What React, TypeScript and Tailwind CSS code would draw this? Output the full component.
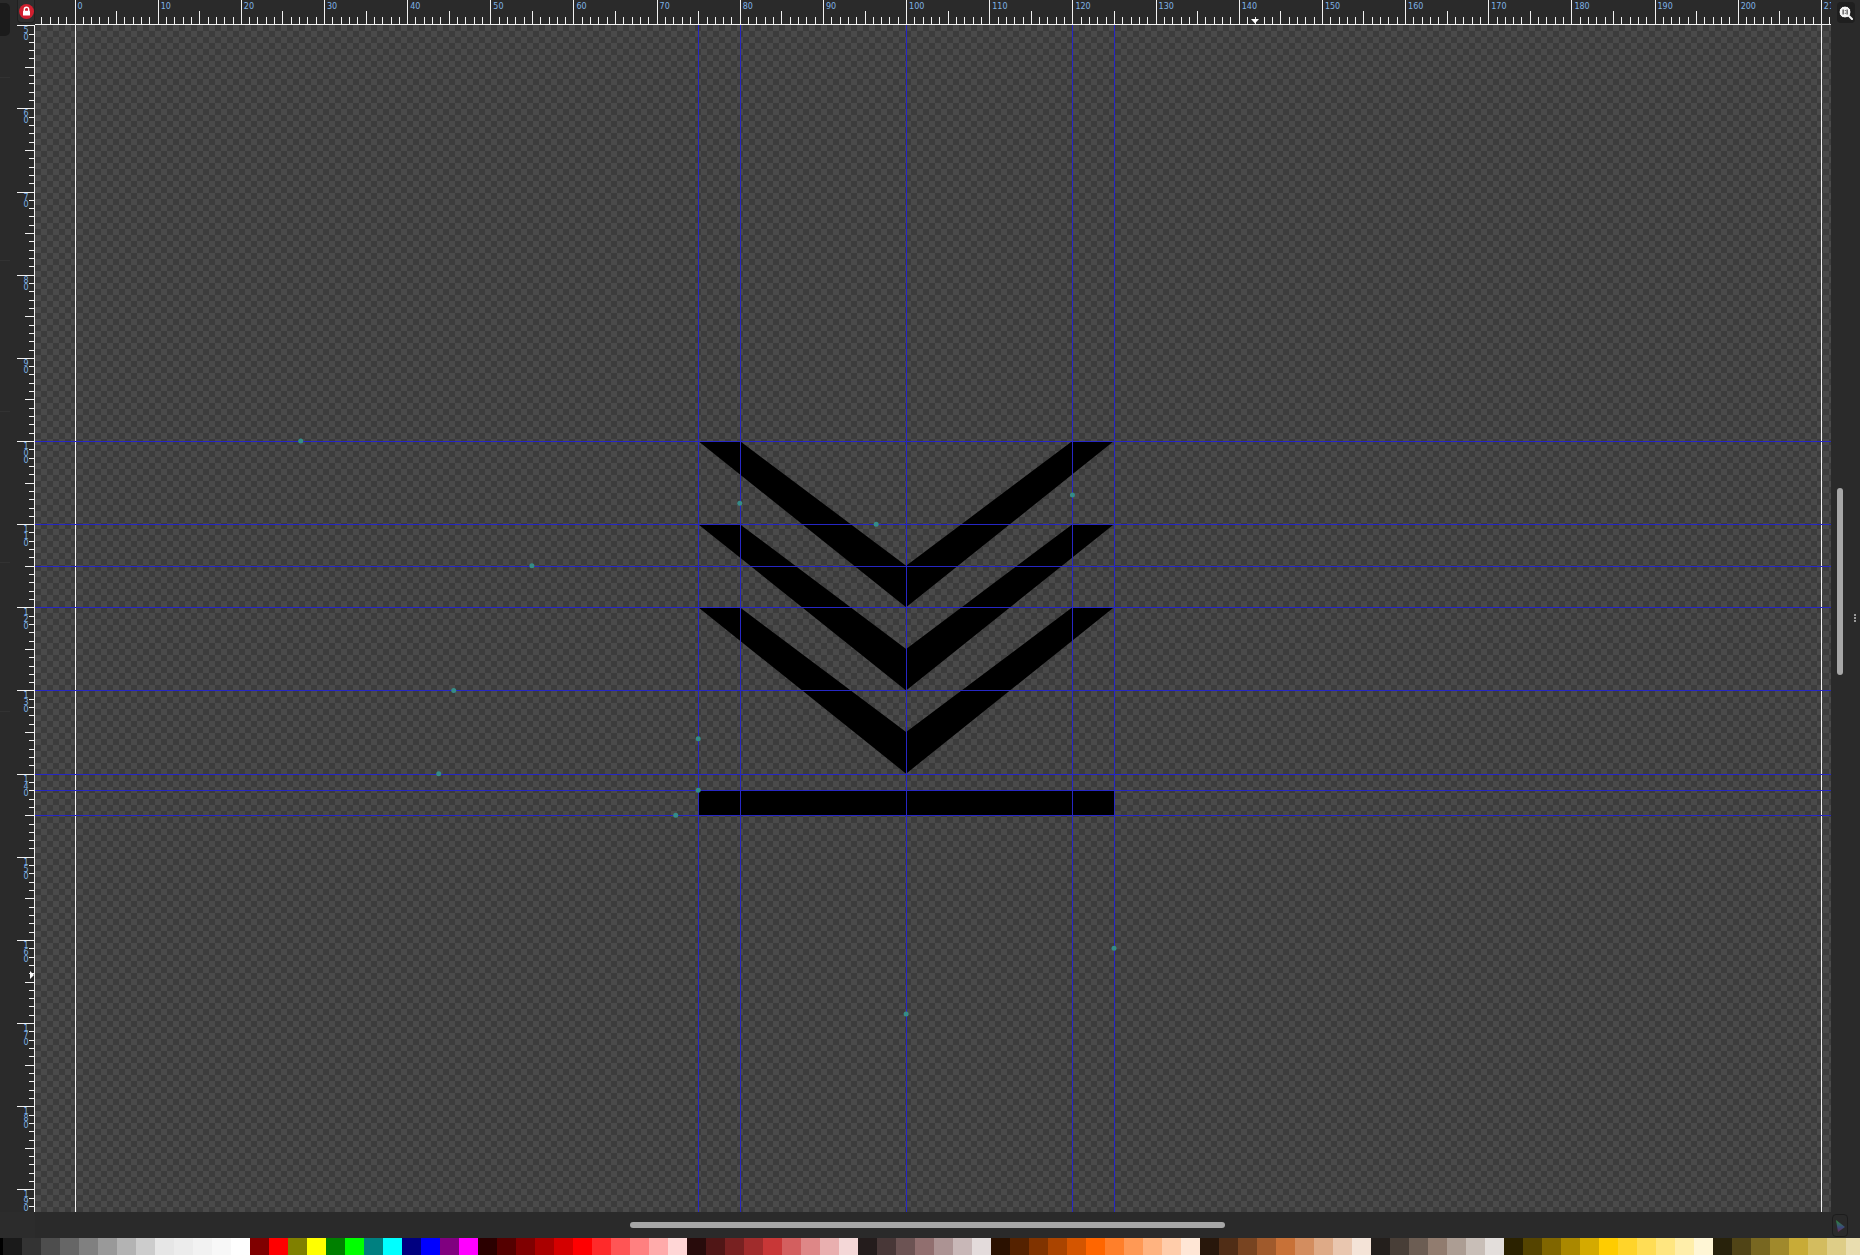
import React from "react";

// drawing units -> canvas pixels (canvas starts at x=35, y=25 of the window)
const S = 8.316;
const X = (u: number) => 39.5 + S * u;
const Y = (u: number) => -415.6 + S * u;
const crisp = (v: number) => Math.round(v) + 0.5;

const CANVAS_W = 1796;
const CANVAS_H = 1187;

const palette = [
  "bg-[#1a1a1a]", "bg-[#333333]", "bg-[#4d4d4d]", "bg-[#666666]", "bg-[#808080]", "bg-[#999999]", "bg-[#b3b3b3]",
  "bg-[#cccccc]", "bg-[#e6e6e6]", "bg-[#ececec]", "bg-[#f2f2f2]", "bg-[#f8f8f8]", "bg-[#ffffff]",
  "bg-[#800000]", "bg-[#ff0000]", "bg-[#808000]", "bg-[#ffff00]", "bg-[#008000]", "bg-[#00ff00]",
  "bg-[#008080]", "bg-[#00ffff]", "bg-[#000080]", "bg-[#0000ff]", "bg-[#800080]", "bg-[#ff00ff]",
  "bg-[#2b0000]", "bg-[#550000]", "bg-[#800001]", "bg-[#aa0000]", "bg-[#d40000]", "bg-[#ff0001]",
  "bg-[#ff2a2a]", "bg-[#ff5555]", "bg-[#ff8080]", "bg-[#ffaaaa]", "bg-[#ffd5d5]",
  "bg-[#280b0b]", "bg-[#501616]", "bg-[#782121]", "bg-[#a02c2c]", "bg-[#c83737]", "bg-[#d35f5f]",
  "bg-[#de8787]", "bg-[#e9afaf]", "bg-[#f4d7d7]",
  "bg-[#241c1c]", "bg-[#483737]", "bg-[#6c5353]", "bg-[#916f6f]", "bg-[#ac9393]", "bg-[#c8b7b7]", "bg-[#e3dbdb]",
  "bg-[#2b1100]", "bg-[#552200]", "bg-[#803300]", "bg-[#aa4400]", "bg-[#d45500]", "bg-[#ff6600]",
  "bg-[#ff7f2a]", "bg-[#ff9955]", "bg-[#ffb380]", "bg-[#ffccaa]", "bg-[#ffe6d5]",
  "bg-[#28170b]", "bg-[#502d16]", "bg-[#784421]", "bg-[#a05a2c]", "bg-[#c87137]", "bg-[#d38d5f]",
  "bg-[#deaa87]", "bg-[#e9c6af]", "bg-[#f4e3d7]",
  "bg-[#241f1c]", "bg-[#483e37]", "bg-[#6c5d53]", "bg-[#917c6f]", "bg-[#ac9d93]", "bg-[#c8beb7]", "bg-[#e3dedb]",
  "bg-[#2b2200]", "bg-[#554400]", "bg-[#806600]", "bg-[#aa8800]", "bg-[#d4aa00]", "bg-[#ffcc00]",
  "bg-[#ffd42a]", "bg-[#ffdd55]", "bg-[#ffe680]", "bg-[#ffeeaa]", "bg-[#fff6d5]",
  "bg-[#28220b]", "bg-[#504416]", "bg-[#786721]", "bg-[#a0892c]", "bg-[#c8ab37]", "bg-[#d3bc5f]",
  "bg-[#decd87]", "bg-[#e9ddaf]",
];

const hGuides = [100, 110, 115, 120, 130, 140, 142, 145];
const vGuides = [75, 80, 100, 120, 125];
const anchors: [number, number][] = [
  [27.2, 100], [55, 115], [45.6, 130], [43.8, 140], [75, 135.8], [75, 142], [72.3, 145],
  [80, 107.5], [96.4, 110], [120, 106.5], [125, 161], [100, 168.9],
];

function LockIcon() {
  return (
    <svg width="15" height="15" viewBox="0 0 15 15">
      <circle cx="7.5" cy="7.5" r="7.5" fill="#d11f2e" />
      <path d="M5.3 7 V5.4 a2.2 2.2 0 0 1 4.4 0 V7" stroke="#fff" strokeWidth="1.4" fill="none" />
      <rect x="4" y="6.8" width="7" height="4.8" rx="0.6" fill="#fff" />
    </svg>
  );
}

function TopRuler() {
  const ticks = [];
  for (let u = -4; u <= 212; u++) {
    const x = crisp(X(u));
    const m = Math.abs(u) % 10;
    const y1 = m === 0 ? 0 : m === 5 ? 11 : 17;
    ticks.push(<line key={u} x1={x} x2={x} y1={y1} y2={24} stroke="#f2f2f2" strokeWidth="1" />);
    if (m === 0 && u >= 0) {
      ticks.push(
        <text key={"t" + u} x={X(u) + 3} y={8.5} fontSize="8" fill="#7fb2e5">
          {u}
        </text>
      );
    }
  }
  return (
    <svg width={CANVAS_W} height="25" className="block shrink-0">
      {ticks}
      <line x1="0" x2={CANVAS_W} y1="24.5" y2="24.5" stroke="#f2f2f2" />
      <polygon points="1216,19 1224,19 1220,23.5" fill="#fff" />
    </svg>
  );
}

function LeftRuler() {
  const ticks = [];
  for (let u = 50; u <= 193; u++) {
    const y = crisp(Y(u));
    const m = u % 10;
    const x1 = m === 0 ? 0 : m === 5 ? 8 : 12;
    ticks.push(<line key={u} x1={x1} x2={17} y1={y} y2={y} stroke="#f2f2f2" strokeWidth="1" />);
    if (m === 0) {
      const digits = String(u).split("");
      ticks.push(
        <text key={"t" + u} fontSize="8" fill="#7fb2e5" textAnchor="middle">
          {digits.map((d, i) => (
            <tspan key={i} x={9} y={Y(u) + 8 + i * 7}>
              {d}
            </tspan>
          ))}
        </text>
      );
    }
  }
  return (
    <svg width="18" height={CANVAS_H} className="block shrink-0">
      {ticks}
      <line x1="17.5" x2="17.5" y1="0" y2={CANVAS_H} stroke="#f2f2f2" />
      <polygon points="13,946 17,950 13,954" fill="#fff" />
    </svg>
  );
}

function Canvas() {
  const chevrons = [0, 10, 20].map((d) => {
    const pts = [
      [75, 100 + d], [80, 100 + d], [100, 115 + d], [120, 100 + d], [125, 100 + d], [100, 120 + d],
    ]
      .map(([a, b]) => `${X(a)},${Y(b)}`)
      .join(" ");
    return <polygon key={d} points={pts} fill="#000" />;
  });
  return (
    <svg width={CANVAS_W} height={CANVAS_H} className="block shrink-0">
      <defs>
        <pattern id="chk" width="12" height="12" patternUnits="userSpaceOnUse">
          <rect width="12" height="12" fill="#4a4a4a" />
          <rect width="6" height="6" fill="#3c3c3c" />
          <rect x="6" y="6" width="6" height="6" fill="#3c3c3c" />
        </pattern>
      </defs>
      <rect width={CANVAS_W} height={CANVAS_H} fill="url(#chk)" />
      <line x1={crisp(X(0))} x2={crisp(X(0))} y1="0" y2={CANVAS_H} stroke="#f4f4f4" />
      <line x1={crisp(X(210))} x2={crisp(X(210))} y1="0" y2={CANVAS_H} stroke="#f4f4f4" />
      {chevrons}
      <rect x={X(75)} y={Y(142)} width={X(125) - X(75)} height={Y(145) - Y(142)} fill="#000" />
      {hGuides.map((g) => (
        <line key={"h" + g} x1="0" x2={CANVAS_W} y1={crisp(Y(g))} y2={crisp(Y(g))} stroke="#2626c4" />
      ))}
      {vGuides.map((g) => (
        <line key={"v" + g} x1={crisp(X(g))} x2={crisp(X(g))} y1="0" y2={CANVAS_H} stroke="#2626c4" />
      ))}
      {anchors.map(([a, b], i) => (
        <circle key={i} cx={X(a)} cy={Y(b)} r="2.5" fill="#368c88" />
      ))}
    </svg>
  );
}

export default function App() {
  return (
    <div className="w-[1860px] h-[1255px] flex flex-col bg-[#2a2a2a] overflow-hidden font-['DejaVu_Sans',sans-serif]">
      <div className="flex h-[1212px]">
        {/* side strip */}
        <div className="w-[17px] shrink-0 flex flex-col">
          <div className="mt-[3px] h-[33px] w-[10px] rounded-r-[5px] bg-[#1b1b1b]" />
          <div className="mt-[41px] h-px w-[10px] bg-[#323232]" />
          <div className="mt-[182px] h-px w-[10px] bg-[#323232]" />
          <div className="mt-[150px] h-px w-[10px] bg-[#323232]" />
          <div className="mt-[150px] h-px w-[10px] bg-[#323232]" />
          <div className="mt-[148px] h-px w-[10px] bg-[#323232]" />
        </div>
        <div className="flex flex-col w-[1843px]">
          <div className="flex h-[25px]">
            <div className="w-[18px] h-[23px] shrink-0 flex items-center justify-center rounded-b-[4px] bg-[#2f2f2f] border border-t-0 border-[#202020]">
              <LockIcon />
            </div>
            <TopRuler />
            <div className="flex-1 flex items-start justify-center pt-[2px]">
              <div className="w-[18px] h-[21px] rounded-[4px] bg-[#1f1f1f] flex items-center justify-center">
                <svg width="15" height="15" viewBox="0 0 15 15">
                  <circle cx="7" cy="7" r="6" fill="#f4f4f4" stroke="#111" strokeWidth="1" />
                  <rect x="4.6" y="4.5" width="1" height="5" fill="#222" />
                  <rect x="8.6" y="4.5" width="1" height="5" fill="#222" />
                  <rect x="6.8" y="5.2" width="0.9" height="0.9" fill="#222" />
                  <rect x="6.8" y="7.8" width="0.9" height="0.9" fill="#222" />
                  <path d="M11 11 L14 14" stroke="#f4f4f4" strokeWidth="2" strokeLinecap="round" />
                </svg>
              </div>
            </div>
          </div>
          <div className="flex h-[1187px]">
            <LeftRuler />
            <Canvas />
            <div className="flex-1 flex">
              <div className="pl-[6px] pt-[463px]">
                <div className="w-[6px] h-[187px] rounded-full bg-[#a7a7a7]" />
              </div>
              <div className="ml-[11px] pt-[589px] flex flex-col gap-[1px]">
                <div className="w-[2px] h-[2px] bg-[#9a9a9a]" />
                <div className="w-[2px] h-[2px] bg-[#9a9a9a]" />
                <div className="w-[2px] h-[2px] bg-[#9a9a9a]" />
              </div>
            </div>
          </div>
        </div>
      </div>

      {/* horizontal scrollbar row */}
      <div className="flex h-[26px]">
        <div className="w-[35px] shrink-0 bg-[#2c2c2c]" />
        <div className="ml-[595px] mt-[10px] w-[595px] h-[6px] rounded-full bg-[#a7a7a7]" />
        <div className="flex-1" />
        <div className="mr-[12px] mt-[2px] w-[16px] h-[23px] rounded-[4px] border border-[#1c1c1c] flex items-center justify-center">
          <svg width="10" height="12" viewBox="0 0 10 12">
            <defs>
              <linearGradient id="cm" x1="0" y1="0" x2="0" y2="1">
                <stop offset="0" stopColor="#2e8b3a" />
                <stop offset="0.6" stopColor="#3a4a7a" />
                <stop offset="1" stopColor="#6a2a4a" />
              </linearGradient>
            </defs>
            <polygon points="1,0 10,7 3,12" fill="url(#cm)" />
          </svg>
        </div>
      </div>

      {/* palette */}
      <div className="flex h-[17px] overflow-hidden">
        <div className="w-[3px] shrink-0 bg-[#000000]" />
        {palette.map((c, i) => (
          <div key={i} className={`w-[19px] shrink-0 ${c}`} />
        ))}
      </div>
    </div>
  );
}
